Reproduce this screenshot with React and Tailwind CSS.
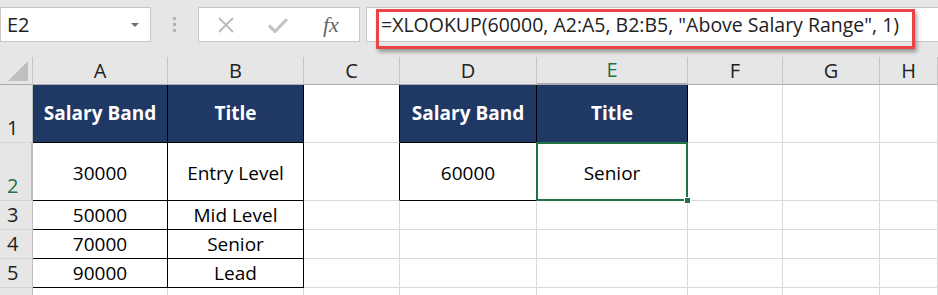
import React from 'react';

const Cell = ({ className = '', children }) => (
    <div className={`flex items-center justify-center text-[19px] text-black ${className}`}>{children}</div>
);

const RowHead = ({ className = '', children }) => (
    <div className={`flex items-end justify-start pl-[7px] pb-[1px] text-[20px] leading-[26px] bg-[#e6e6e6] border-r border-b border-r-[#bdbdbd] border-b-[#d4d4d4] text-[#222] ${className}`}>
        {children}
    </div>
);

const ColHead = ({ className = '', children }) => (
    <div className={`flex items-center justify-center text-[20px] bg-[#e6e6e6] border-r border-b border-r-[#c6c6c6] border-b-[#ababab] text-[#222] ${className}`}>
        {children}
    </div>
);

const navy = 'bg-[#203864] text-white font-bold text-[18px] border-r border-b border-black';
const boxed = 'bg-white border-r border-b border-black';
const grid = 'bg-white border-r border-b border-[#d9d9d9]';

const App = () => {
    return (
        <div className="w-[938px] h-[295px] overflow-hidden bg-[#e6e6e6] font-['Open_Sans',sans-serif]">
            {/* Name box + formula bar */}
            <div className="h-[57px] flex items-start pt-[7px]">
                <div className="w-[151px] h-[35px] bg-white border border-[#c6c6c6] flex items-center justify-between pl-[6px] pr-[11px]">
                    <span className="text-[20px] text-[#222]">E2</span>
                    <svg width="8" height="4" viewBox="0 0 8 4"><path d="M0 0h8L4 4z" fill="#6f6f6f" /></svg>
                </div>
                <div className="w-[47px] h-[35px] flex flex-col items-center justify-center gap-[3px]">
                    <span className="w-[3px] h-[3px] bg-[#b4b4b4]" />
                    <span className="w-[3px] h-[3px] bg-[#b4b4b4]" />
                    <span className="w-[3px] h-[3px] bg-[#b4b4b4]" />
                </div>
                <div className="w-[162px] h-[35px] bg-white border border-[#c6c6c6] flex items-center pl-[18px] gap-[33px]">
                    <svg width="18" height="16" viewBox="0 0 18 16">
                        <path d="M2 1l14 14M16 1L2 15" stroke="#bcbcbc" strokeWidth="2" fill="none" />
                    </svg>
                    <svg width="20" height="16" viewBox="0 0 20 16">
                        <path d="M1 8.5l6 6L19 2" stroke="#c4c4c4" strokeWidth="3.2" fill="none" />
                    </svg>
                    <span className="ml-[2px] font-['Liberation_Serif',serif] italic text-[22px] text-[#666] leading-none">fx</span>
                </div>
                <div className="ml-[6px] flex-1 h-[35px] bg-white border-l border-y border-[#c6c6c6] relative flex items-center pl-[14px]">
                    <span className="text-[19.5px] text-[#222] whitespace-nowrap">
                        =XLOOKUP(60000, A2:A5, B2:B5, "Above Salary Range", 1)
                    </span>
                    <div className="absolute left-[9px] top-[1px] w-[539px] h-[40px] border-[3px] border-[#ea4446] shadow-[2px_3px_4px_rgba(0,0,0,0.35)]" />
                </div>
            </div>

            {/* Sheet grid */}
            <div className="grid grid-cols-[33px_135px_136px_96px_137px_151px_95px_97px_58px] grid-rows-[28px_58px_58px_29px_29px_29px_7px]">
                {/* header row */}
                <div className="bg-[#e6e6e6] border-r border-b border-r-[#c6c6c6] border-b-[#ababab] flex items-end justify-end pr-[4px] pb-[3px]">
                    <svg width="20" height="20" viewBox="0 0 20 20"><path d="M20 0V20H0z" fill="#bfbfbf" /></svg>
                </div>
                <ColHead>A</ColHead>
                <ColHead>B</ColHead>
                <ColHead>C</ColHead>
                <ColHead>D</ColHead>
                <ColHead className="bg-[#d2d2d2] text-[#217346] border-b-2 border-b-[#217346]">E</ColHead>
                <ColHead>F</ColHead>
                <ColHead>G</ColHead>
                <ColHead>H</ColHead>

                {/* row 1 */}
                <RowHead>1</RowHead>
                <Cell className={navy}>Salary Band</Cell>
                <Cell className={navy}>Title</Cell>
                <Cell className="bg-white border-r border-b border-r-black border-b-[#d9d9d9]" />
                <Cell className={navy}>Salary Band</Cell>
                <Cell className={navy}>Title</Cell>
                <Cell className={grid} />
                <Cell className={grid} />
                <Cell className={grid} />

                {/* row 2 */}
                <RowHead className="bg-[#d2d2d2] text-[#217346] border-r-2 border-r-[#217346]">2</RowHead>
                <Cell className={`${boxed} pt-[3px]`}>30000</Cell>
                <Cell className={`${boxed} pt-[3px]`}>Entry Level</Cell>
                <Cell className="bg-white border-r border-b border-r-black border-b-[#d9d9d9]" />
                <Cell className={`${boxed} pt-[3px]`}>60000</Cell>
                <Cell className={`${boxed} pt-[3px] relative`}>
                    Senior
                    <div className="absolute -top-px -left-px -right-px -bottom-px border-2 border-[#217346]" />
                    <div className="absolute -right-[4px] -bottom-[4px] w-[7px] h-[7px] bg-[#217346] border border-white" />
                </Cell>
                <Cell className={grid} />
                <Cell className={grid} />
                <Cell className={grid} />

                {/* rows 3-5 */}
                {[
                    ['3', '50000', 'Mid Level'],
                    ['4', '70000', 'Senior'],
                    ['5', '90000', 'Lead'],
                ].map(([n, band, title]) => (
                    <React.Fragment key={n}>
                        <RowHead>{n}</RowHead>
                        <Cell className={boxed}>{band}</Cell>
                        <Cell className={boxed}>{title}</Cell>
                        <Cell className={grid} />
                        <Cell className={grid} />
                        <Cell className={grid} />
                        <Cell className={grid} />
                        <Cell className={grid} />
                        <Cell className={grid} />
                    </React.Fragment>
                ))}

                {/* row 6 (cut off) */}
                <div className="bg-[#e6e6e6] border-r border-r-[#bdbdbd]" />
                <div className="bg-white border-r border-[#d9d9d9]" />
                <div className="bg-white border-r border-[#d9d9d9]" />
                <div className="bg-white border-r border-[#d9d9d9]" />
                <div className="bg-white border-r border-[#d9d9d9]" />
                <div className="bg-white border-r border-[#d9d9d9]" />
                <div className="bg-white border-r border-[#d9d9d9]" />
                <div className="bg-white border-r border-[#d9d9d9]" />
                <div className="bg-white border-r border-[#d9d9d9]" />
            </div>
        </div>
    );
};

export default App;
